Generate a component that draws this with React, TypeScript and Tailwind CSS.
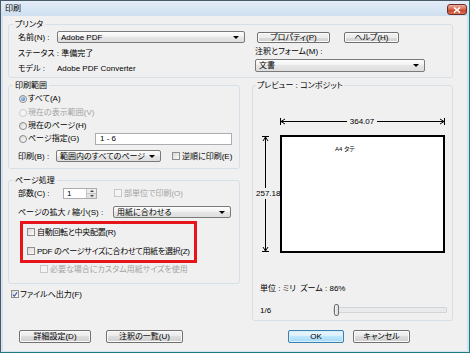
import React from "react";

function Btn({ label, className = "", primary = false }: { label: string; className?: string; primary?: boolean }) {
  return (
    <div
      className={`flex items-center justify-center rounded-[2px] border shrink-0 ${
        primary
          ? "border-[#3c7fb1] bg-[linear-gradient(#eaf6fd,#d9f0fc_50%,#bee6fd_50%,#a7d9f5)] shadow-[inset_0_0_0_1px_#d3eefd]"
          : "border-[#707070] bg-[linear-gradient(#f2f2f2,#ebebeb_50%,#dddddd_50%,#cfcfcf)] shadow-[inset_0_0_0_1px_#fbfbfb]"
      } ${className}`}
    >
      <span>{label}</span>
    </div>
  );
}

function Arrow() {
  return <span className="w-0 h-0 border-l-[3px] border-r-[3px] border-t-[3px] border-l-transparent border-r-transparent border-t-black shrink-0" />;
}

function Select({ value, className = "" }: { value: string; className?: string }) {
  return (
    <div
      className={`flex items-center border border-[#7a7a7a] rounded-[2px] bg-[linear-gradient(#fdfdfd,#f0f0f0_50%,#e6e6e6_50%,#dedede)] pl-[3px] pr-[5px] shrink-0 ${className}`}
    >
      <span className="flex-1 truncate">{value}</span>
      <Arrow />
    </div>
  );
}

function Radio({ checked = false, disabled = false }: { checked?: boolean; disabled?: boolean }) {
  return (
    <span
      className={`w-[8px] h-[8px] rounded-full border flex items-center justify-center shrink-0 ${
        disabled ? "border-[#cacaca] bg-[#f5f5f5]" : "border-[#8a8a8a] bg-[linear-gradient(135deg,#d6d6d6,#ffffff)]"
      }`}
    >
      {checked && <span className="w-[4px] h-[4px] rounded-full bg-[radial-gradient(circle_at_35%_35%,#a6d8fa,#1d5bb4)]" />}
    </span>
  );
}

function Check({ checked = false, disabled = false }: { checked?: boolean; disabled?: boolean }) {
  return (
    <span
      className={`w-[8px] h-[8px] border flex items-center justify-center shrink-0 ${
        disabled ? "border-[#c8c8c8] bg-[#f4f4f4]" : "border-[#8e8f8f] bg-[linear-gradient(135deg,#d9d9d9,#fbfbfb)]"
      }`}
    >
      {checked && (
        <svg viewBox="0 0 8 8" className="w-[7px] h-[7px]">
          <path d="M1.2 4.2 L3.2 6.3 L6.8 1.2" stroke="#3a4f9e" strokeWidth="1.4" fill="none" />
        </svg>
      )}
    </span>
  );
}

function Preview() {
  return (
    <fieldset className="w-[201px] h-[241px] border border-[#d5dfe5] rounded-[3px] shrink-0">
      <legend className="ml-[3px] px-[1px]">プレビュー : コンポジット</legend>
      <div className="relative h-[173px]">
        <svg className="absolute inset-0" width="199" height="173" viewBox="0 0 199 173">
          <g stroke="#000" strokeWidth="1" fill="none">
            <line x1="27.5" y1="30.5" x2="191.5" y2="30.5" />
            <line x1="27.5" y1="27" x2="27.5" y2="34" />
            <polyline points="32,28 28,30.5 32,33" />
            <line x1="191.5" y1="27" x2="191.5" y2="34" />
            <polyline points="187,28 191,30.5 187,33" />
            <line x1="12.5" y1="45.5" x2="12.5" y2="160.5" />
            <line x1="9" y1="45.5" x2="16" y2="45.5" />
            <polyline points="10,50 12.5,46 15,50" />
            <line x1="9" y1="160.5" x2="16" y2="160.5" />
            <polyline points="10,156 12.5,160 15,156" />
          </g>
        </svg>
        <div className="absolute left-[94px] top-[25px] w-[30px] text-center bg-[#f0f0f0]">364.07</div>
        <div className="absolute left-[2px] top-[97px] bg-[#f0f0f0] px-[1px]">257.18</div>
        <div className="absolute left-[27px] top-[44px] w-[165px] h-[118px] border-2 border-black bg-white pl-[53px] pt-[9px]">
          <span className="block text-[6px] leading-[7px]">A4 タテ</span>
        </div>
      </div>
      <div className="mt-[18px] h-[12px] pl-[7px] flex items-center">単位 : ミリ&nbsp;&nbsp;ズーム : 86%</div>
      <div className="mt-[10px] h-[12px] pl-[7px] flex items-center">
        <span className="w-[73px] shrink-0">1/6</span>
        <div className="relative w-[114px] h-[6px] border border-[#d2d5d8] bg-[#e8eaec] rounded-[1px]">
          <span className="absolute left-0 top-[-4px] w-[5px] h-[12px] border border-[#707070] rounded-[2px] bg-[linear-gradient(90deg,#f4f4f4,#d8d8d8)]" />
        </div>
      </div>
    </fieldset>
  );
}

export default function App() {
  return (
    <div className="w-[470px] h-[353px] flex flex-col overflow-hidden whitespace-nowrap border border-l-[#4b5a68] border-t-[#4b5a68] border-r-[#1e7a85] border-b-[#1e7a85] bg-[#d3e2f1] font-['Liberation_Sans','Noto_Sans_CJK_JP',sans-serif] text-[8px] leading-[11px] text-black [font-feature-settings:'palt']">
      {/* title bar */}
      <div className="h-[15px] flex items-start shrink-0 bg-[linear-gradient(#e3edf8,#cfdff0)]">
        <span className="ml-[4px] mt-[2px]">印刷</span>
        <div className="ml-auto mr-[2px] mt-[3px] w-[20px] h-[11px] rounded-[3px] border border-[#6d2d22] bg-[linear-gradient(#eab0a2,#d76249_50%,#c43b20_50%,#d8735a)] flex items-center justify-center">
          <svg viewBox="0 0 8 6" className="w-[8px] h-[6px]">
            <path d="M1 0.5 L7 5.5 M7 0.5 L1 5.5" stroke="#fff" strokeWidth="1.6" />
          </svg>
        </div>
      </div>

      {/* client */}
      <div className="flex-1 ml-[2px] mr-[2px] mb-[1px] bg-[#f0f0f0] pt-[3px] pl-[5px] flex flex-col">
        {/* printer */}
        <fieldset className="w-[445px] h-[59px] border border-[#d5dfe5] rounded-[3px] shrink-0">
          <legend className="ml-[4px] px-[2px]">プリンタ</legend>
          <div className="flex pl-[9px]">
            <div className="w-[227px] flex flex-col">
              <div className="mt-[1px] h-[12px] flex items-center">
                <span className="w-[39px] shrink-0">名前(N) :</span>
                <Select value="Adobe PDF" className="flex-1 h-[12px]" />
              </div>
              <div className="mt-[5px]">ステータス : 準備完了</div>
              <div className="mt-[4px] flex">
                <span className="w-[39px] shrink-0">モデル :</span>
                <span>Adobe PDF Converter</span>
              </div>
            </div>
            <div className="ml-[10px] flex flex-col">
              <div className="mt-[2px] flex">
                <Btn label="プロパティ(P)" className="ml-[2px] w-[73px] h-[11px]" />
                <Btn label="ヘルプ(H)" className="ml-[14px] w-[55px] h-[11px]" />
              </div>
              <div className="mt-[3px]">注釈とフォーム(M) :</div>
              <Select value="文書" className="mt-[2px] w-[170px] h-[13px]" />
            </div>
          </div>
        </fieldset>

        {/* middle */}
        <div className="mt-[2px] flex">
          <div className="w-[232px] flex flex-col shrink-0">
            <fieldset className="h-[89px] border border-[#d5dfe5] rounded-[3px]">
              <legend className="ml-[4px] px-[2px]">印刷範囲</legend>
              <div className="pl-[10px] flex flex-col">
                <div className="mt-[1px] h-[13px] flex items-center gap-[1px]">
                  <Radio checked />
                  <span>すべて(A)</span>
                </div>
                <div className="mt-[1px] h-[13px] flex items-center gap-[1px] text-[#a3a3a3]">
                  <Radio disabled />
                  <span>現在の表示範囲(V)</span>
                </div>
                <div className="h-[13px] flex items-center gap-[1px]">
                  <Radio />
                  <span>現在のページ(H)</span>
                </div>
                <div className="h-[13px] flex items-center">
                  <div className="w-[76px] flex items-center gap-[1px] shrink-0">
                    <Radio />
                    <span>ページ指定(G)</span>
                  </div>
                  <div className="w-[137px] h-[12px] border border-[#abadb3] bg-white pl-[4px] flex items-center">1 - 6</div>
                </div>
                <div className="mt-[5px] -ml-[1px] h-[12px] flex items-center">
                  <span className="w-[38px] shrink-0">印刷(B) :</span>
                  <Select value="範囲内のすべてのページ" className="w-[105px] h-[12px]" />
                  <span className="ml-[11px]">
                    <Check />
                  </span>
                  <span className="ml-[2px]">逆順に印刷(E)</span>
                </div>
              </div>
            </fieldset>

            <fieldset className="mt-[6px] h-[109px] border border-[#d5dfe5] rounded-[3px]">
              <legend className="ml-[4px] px-[2px]">ページ処理</legend>
              <div className="flex flex-col">
                <div className="mt-[1px] pl-[9px] h-[12px] flex items-center">
                  <span className="w-[45px] shrink-0">部数(C) :</span>
                  <div className="w-[34px] h-[11px] border border-[#abadb3] bg-white flex shrink-0">
                    <span className="flex-1 pl-[3px] leading-[9px]">1</span>
                    <div className="w-[10px] flex flex-col border-l border-[#c4c4c4]">
                      <div className="flex-1 flex items-center justify-center bg-[#ececec] border-b border-[#c4c4c4]">
                        <span className="w-0 h-0 border-l-[2px] border-r-[2px] border-b-[2px] border-l-transparent border-r-transparent border-b-[#444]" />
                      </div>
                      <div className="flex-1 flex items-center justify-center bg-[#e2e2e2]">
                        <span className="w-0 h-0 border-l-[2px] border-r-[2px] border-t-[2px] border-l-transparent border-r-transparent border-t-[#444]" />
                      </div>
                    </div>
                  </div>
                  <span className="ml-[17px]">
                    <Check disabled />
                  </span>
                  <span className="ml-[2px] text-[#a3a3a3]">部単位で印刷(O)</span>
                </div>
                <div className="mt-[7px] pl-[9px] h-[12px] flex items-center">
                  <span className="w-[95px] shrink-0">ページの拡大 / 縮小(S) :</span>
                  <Select value="用紙に合わせる" className="w-[118px] h-[12px]" />
                </div>
                <div className="mt-[3px] ml-[11px] w-[177px] h-[42px] border-[3px] border-[#e8141b] flex flex-col tracking-[-0.3px]">
                  <div className="mt-[2px] pl-[4px] h-[12px] flex items-center gap-[2px]">
                    <Check />
                    <span>自動回転と中央配置(R)</span>
                  </div>
                  <div className="mt-[7px] pl-[4px] h-[12px] flex items-center gap-[2px]">
                    <Check />
                    <span>PDF のページサイズに合わせて用紙を選択(Z)</span>
                  </div>
                </div>
                <div className="pl-[31px] h-[12px] flex items-center gap-[2px] text-[#a3a3a3]">
                  <Check disabled />
                  <span>必要な場合にカスタム用紙サイズを使用</span>
                </div>
              </div>
            </fieldset>

            <div className="mt-[4px] pl-[3px] h-[12px] flex items-center gap-[1px]">
              <Check checked />
              <span>ファイルへ出力(F)</span>
            </div>
          </div>

          <div className="ml-[12px]">
            <Preview />
          </div>
        </div>

        {/* buttons */}
        <div className="mt-[9px] pl-[11px] h-[13px] flex">
          <Btn label="詳細設定(D)" className="w-[72px] h-[13px]" />
          <Btn label="注釈の一覧(U)" className="ml-[15px] w-[77px] h-[13px]" />
          <Btn label="OK" primary className="ml-[105px] w-[56px] h-[13px]" />
          <Btn label="キャンセル" className="ml-[9px] w-[57px] h-[13px]" />
        </div>
      </div>
    </div>
  );
}
